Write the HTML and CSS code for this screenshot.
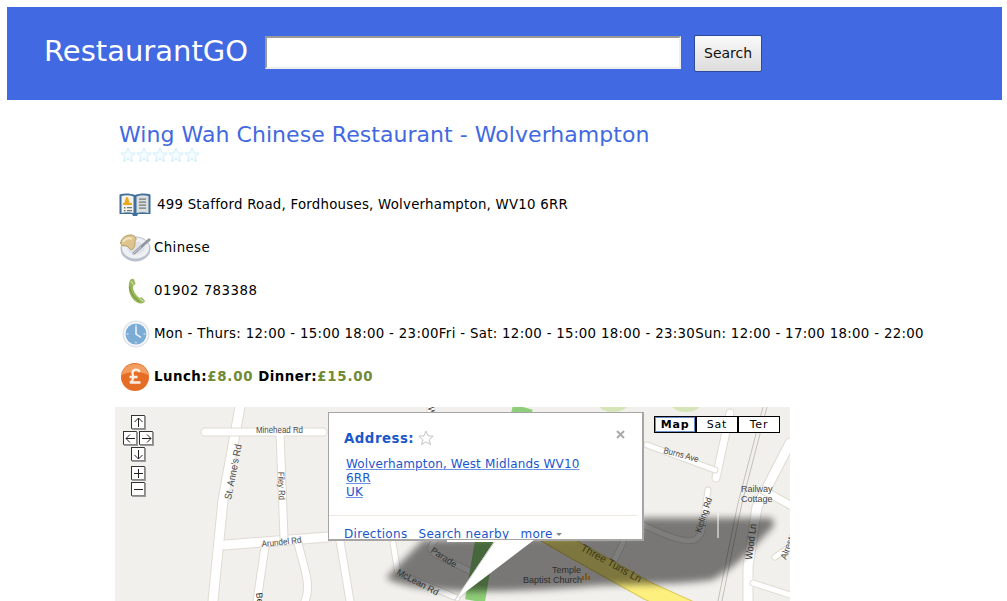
FILE: index.html
```html
<!DOCTYPE html>
<html>
<head>
    <title>RestaurantGO</title>
    <link rel="stylesheet" href="styles.css">
</head>
<body>
    <form class="header">
        <span class="logo">RestaurantGO</span>
        <input type="text" class="search-box">
        <button type="button" class="search-button">Search</button>
    </form>

    <div class="content">
        <h1 class="name">Wing Wah Chinese Restaurant - Wolverhampton</h1>
        <div class="stars">
            <svg width="16" height="16" viewBox="0 0 16 16"><path class="star" d="M8 1l2 4.800 5.200.4-4 3.400 1.300 5L8 11.900 3.500 14.600l1.300-5-4-3.400 5.200-.4z"/></svg>
            <svg width="16" height="16" viewBox="0 0 16 16"><path class="star" d="M8 1l2 4.800 5.200.4-4 3.400 1.300 5L8 11.900 3.500 14.600l1.300-5-4-3.400 5.200-.4z"/></svg>
            <svg width="16" height="16" viewBox="0 0 16 16"><path class="star" d="M8 1l2 4.800 5.200.4-4 3.400 1.300 5L8 11.900 3.500 14.600l1.300-5-4-3.400 5.200-.4z"/></svg>
            <svg width="16" height="16" viewBox="0 0 16 16"><path class="star" d="M8 1l2 4.800 5.200.4-4 3.400 1.300 5L8 11.900 3.500 14.600l1.300-5-4-3.400 5.200-.4z"/></svg>
            <svg width="16" height="16" viewBox="0 0 16 16"><path class="star" d="M8 1l2 4.800 5.200.4-4 3.400 1.300 5L8 11.900 3.500 14.600l1.300-5-4-3.400 5.200-.4z"/></svg>
        </div>

        <div class="info-list">
            <div class="info-row">
                <svg class="icon icon-wide" width="32" height="24" viewBox="0 0 32 24">
                    <path d="M.5 1.500c5-1.500 10-1.500 15.500.5 5.500-2 10.500-2 15.500-.5V21H19l-1 2h-4l-1-2H.5z" fill="#3f6f9a"/>
                    <path d="M2.500 3c4-1 8-1 12 .5V20c-4-1-8-1-12 0z" fill="#f4f2ea"/>
                    <path d="M17.500 3.500c4-1.500 8-1.500 12-.5v17c-4-1-8-1-12 0z" fill="#dadedd"/>
                    <path d="M5 10c1.500-1 1-6 3-6s1.500 5 3 6z" fill="#eba81d"/>
                    <path d="M4 10h9v2H4z" fill="#eba81d"/>
                    <path d="M5 14h1.500v1.500H5zM8 14h5v1.200H8zM5 17h1.500v1.500H5zM8 17h5v1.200H8zM20 5.500h7v1.200h-7zM20 8.500h7v1.200h-7zM20 11.500h7v1.200h-7zM20 14.500h7v1.200h-7z" fill="#77797a"/>
                </svg>
                <span class="text-address">499 Stafford Road, Fordhouses, Wolverhampton, WV10 6RR</span>
            </div>
            <div class="info-row">
                <svg class="icon" width="32" height="28" viewBox="0 0 32 28">
                    <ellipse cx="16.500" cy="15" rx="15" ry="12.500" fill="#b9c1cc"/>
                    <ellipse cx="16.500" cy="14" rx="13.500" ry="10.500" fill="#eef0f4"/>
                    <ellipse cx="17" cy="14" rx="9" ry="6.500" fill="#dfe3e9"/>
                    <path d="M1.500 9c1-5 5-7.500 9-8 4-.5 7 2 6.500 4.500-1 1-1.500 3-1 5-.5 3-2.500 6-4.500 5-3-2.500-2-3.500-5-3.500-2.500 0-4.500-.5-5-3z" fill="#dcc48c" stroke="#a98b50" stroke-width=".8"/>
                    <path d="M4 8c2-3 6-5 9-3" stroke="#f3e7c6" stroke-width="2" fill="none"/>
                    <path d="M14 20L31 5" stroke="#8f969f" stroke-width="2.800"/>
                    <path d="M13 20.500L22 13" stroke="#d5d9de" stroke-width="1"/>
                </svg>
                <span class="text-kind">Chinese</span>
            </div>
            <div class="info-row">
                <svg class="icon" width="32" height="26" viewBox="0 0 32 26">
                    <path d="M11 2c1.500-1.500 3.500-1.500 4-.5l1.500 4c0 1.200-2.500 1.500-2.500 3.500 0 4 3 8.500 6 10.500 1.500.8 2-1 3 0l3 3.500c0 1-2 2.500-4 2.500-6 0-11-7-12-13-.5-4-.2-8 1-10.500z" fill="#98b85a"/>
                    <path d="M12 3l2.500 3.500M20.500 20.500l4 3" stroke="#e3ebcf" stroke-width="1"/>
                    <path d="M10.500 8c.5 6 4.500 12 10 15.500" stroke="#7f9c45" stroke-width="1.200" fill="none"/>
                </svg>
                <span class="text-phone">01902 783388</span>
            </div>
            <div class="info-row">
                <svg class="icon" width="32" height="28" viewBox="0 0 32 28">
                    <circle cx="17" cy="14" r="13.500" fill="#dfe3e8"/>
                    <circle cx="17" cy="14" r="12" fill="#f7f8fa"/>
                    <circle cx="17" cy="14" r="10.500" fill="#7bacd6"/>
                    <path d="M17 4.500v2M17 21.500v2M7.500 14h2M24.500 14h2" stroke="#e8f0f7" stroke-width="1"/>
                    <path d="M17 6.500V14l5 3.500" stroke="#f6f8fb" stroke-width="1.500" fill="none"/>
                </svg>
                <span class="text-hours">Mon - Thurs: 12:00 - 15:00 18:00 - 23:00Fri - Sat: 12:00 - 15:00 18:00 - 23:30Sun: 12:00 - 17:00 18:00 - 22:00</span>
            </div>
            <div class="info-row">
                <svg class="icon" width="32" height="28" viewBox="0 0 32 28">
                    <circle cx="16" cy="14" r="14" fill="#e56d25"/>
                    <path d="M3 12a13 11 0 0 1 26 0c-6-4-20-4-26 0z" fill="#f29e62"/>
                    <path d="M20.500 9c-.5-3-6.500-3.500-7 .5-.2 2 1.500 4 .5 6.500-.5 2-2 3-3 3.500h10.500M10.500 14h8" stroke="#fbeee2" stroke-width="2.300" fill="none"/>
                </svg>
                <span class="text-price"><b>Lunch:</b><b class="price">£8.00</b> <b>Dinner:</b><b class="price">£15.00</b></span>
            </div>
        </div>

        <div class="map">
            <svg class="map-tiles" width="675" height="194" viewBox="115 407 675 194">
                <defs>
                    <filter id="blur" x="-10%" y="-30%" width="120%" height="160%"><feGaussianBlur stdDeviation="3.500"/></filter>
                </defs>
                <rect x="115" y="407" width="675" height="194" fill="#f2f0ec"/>
                <ellipse cx="613" cy="405" rx="14" ry="7" fill="#d6e5b8"/>
                <ellipse cx="686" cy="405" rx="14" ry="7" fill="#d6e5b8"/>

                <g class="edge-wide">
                    <path d="M240 407L223 500L213 601M225 545L328 537M790 443L757 507L748 567V601"/>
                </g>
                <g class="road-wide">
                    <path d="M240 407L223 500L213 601M225 545L328 537M790 443L757 507L748 567V601"/>
                </g>
                <g class="edge-mid">
                    <path d="M205 432H323M280 433L284 538M265 547L257 601M298 543C303 565 312 585 305 601M340 541L350 601M730 413L716 478M763 490L790 505M431 405V414"/>
                </g>
                <g class="road-mid">
                    <path d="M205 432H323M280 433L284 538M265 547L257 601M298 543C303 565 312 585 305 601M340 541L350 601M730 413L716 478M763 490L790 505M431 405V414"/>
                </g>
                <g class="edge-thin">
                    <path d="M393 543L398 573L457 598M435 541C428 548 430 552 438 556L472 572M647 445L715 470M708 490L702 530C698 545 685 545 643 525M623 543L613 563M753 583L790 595M775 557L790 547"/>
                </g>
                <g class="road-thin">
                    <path d="M393 543L398 573L457 598M435 541C428 548 430 552 438 556L472 572M647 445L715 470M708 490L702 530C698 545 685 545 643 525M623 543L613 563M753 583L790 595M775 557L790 547"/>
                </g>
                <path class="rail" d="M763 407L738 503L718 601M767 407L742 503L722 601"/>
                <path d="M523 407L485 541L475 601" stroke="#8fce78" stroke-width="20" fill="none"/>
                <path d="M535 527L580 553L648 591L690 610" stroke="#dcc95c" stroke-width="19" fill="none"/>
                <path d="M535 527L580 553L648 591L690 610" stroke="#fdf07f" stroke-width="17" fill="none"/>

                <path class="cast" d="M386 578L423 540L640 535V518H768C775 518 775 524 772 528C755 545 740 565 712 580C680 585 620 584 590 586C550 590 490 592 455 591C430 590 400 586 386 578z" filter="url(#blur)"/>
                <path d="M718 513V538" stroke="#ffffff" stroke-width="1"/>

                <text class="label" x="256" y="433" textLength="47" lengthAdjust="spacingAndGlyphs">Minehead Rd</text>
                <text class="label label-large" transform="translate(231 500) rotate(-79)" textLength="56" lengthAdjust="spacingAndGlyphs">St. Anne's Rd</text>
                <text class="label" transform="translate(278 472) rotate(88)" textLength="28" lengthAdjust="spacingAndGlyphs">Filey Rd</text>
                <text class="label" transform="translate(262 547) rotate(-6)" textLength="40" lengthAdjust="spacingAndGlyphs">Arundel Rd</text>
                <text class="label label-dark" transform="translate(256 593) rotate(84)">Be</text>
                <text class="label label-dark" transform="translate(428 407) rotate(85)">W</text>
                <text class="label label-dark" transform="translate(430 552) rotate(33)">Parade</text>
                <text class="label label-dark" transform="translate(396 574) rotate(28)">McLean Rd</text>
                <text class="label label-dark" x="552" y="573">Temple</text>
                <text class="label label-dark" x="523" y="583">Baptist Church</text>
                <text class="label label-road" transform="translate(580 550) rotate(29)">Three Tuns Ln</text>
                <text class="label" transform="translate(663 453) rotate(15)" textLength="36" lengthAdjust="spacingAndGlyphs">Burns Ave</text>
                <text class="label label-dark" transform="translate(701 533) rotate(-72)" textLength="36" lengthAdjust="spacingAndGlyphs">Kipling Rd</text>
                <text class="label" x="741" y="492">Railway</text>
                <text class="label" x="741" y="502">Cottage</text>
                <text class="label label-large label-dark" transform="translate(752 560) rotate(-83)" textLength="36" lengthAdjust="spacingAndGlyphs">Wood Ln</text>
                <text class="label" transform="translate(786 560) rotate(-70)">Alreston</text>
                <path d="M582 580v-4h2v4zM585 580v-7h2v7zM588 580v-4h2v4z" fill="#7a5a20"/>
            </svg>

            <div class="pan-button pan-up"><svg width="13" height="13" viewBox="0 0 13 13"><path d="M6.500 11V2M2.500 6l4-4 4 4"/></svg></div>
            <div class="pan-button pan-left"><svg width="13" height="13" viewBox="0 0 13 13"><path d="M11 6.500H2M6 2.500l-4 4 4 4"/></svg></div>
            <div class="pan-button pan-right"><svg width="13" height="13" viewBox="0 0 13 13"><path d="M2 6.500h9M7 2.500l4 4-4 4"/></svg></div>
            <div class="pan-button pan-down"><svg width="13" height="13" viewBox="0 0 13 13"><path d="M6.500 2v9M2.500 7l4 4 4-4"/></svg></div>
            <div class="pan-button zoom-in"><svg width="13" height="13" viewBox="0 0 13 13"><path d="M6.500 2v9M2 6.500h9"/></svg></div>
            <div class="pan-button zoom-out"><svg width="13" height="13" viewBox="0 0 13 13"><path d="M2 6.500h9"/></svg></div>

            <div class="map-types">
                <div class="map-type map-type-on">Map</div>
                <div class="map-type">Sat</div>
                <div class="map-type">Ter</div>
            </div>

            <div class="bubble">
                <div class="bubble-title">Address:
                    <svg width="16" height="16" viewBox="0 0 16 16"><path class="bubble-star" d="M8 1l2 4.800 5.200.4-4 3.400 1.300 5L8 11.900 3.500 14.600l1.300-5-4-3.400 5.200-.4z"/></svg>
                </div>
                <svg class="bubble-close" width="9" height="9" viewBox="0 0 9 9"><path d="M1 1l7 7M8 1L1 8"/></svg>
                <a class="bubble-address" href="#">Wolverhampton, West Midlands WV10<br>6RR<br>UK</a>
                <div class="bubble-links">
                    <a href="#">Directions</a>
                    <a href="#">Search nearby</a>
                    <a href="#">more<span class="caret"></span></a>
                </div>
            </div>
            <svg class="bubble-tail" width="88" height="61" viewBox="0 0 88 61">
                <path d="M48 0H87L8 60z" fill="#ffffff"/>
                <path d="M48 1L8 60" stroke="#c8c8c8" stroke-width="1"/>
                <path d="M0 0H48V2H0z" fill="#ffffff"/>
            </svg>
        </div>
    </div>
</body>
</html>
```

FILE: styles.css
```css
html {
    overflow: hidden;
}

body {
    margin: 7px 5px 0 7px;
    height: 594px;
    overflow: hidden;
    font-family: "DejaVu Sans", sans-serif;
    font-size: 13.33px;
    color: #000;
}

.header {
    display: flex;
    align-items: center;
    height: 93px;
    padding-left: 37px;
    background-color: #4169e1;
}

.logo {
    margin: 0 17px 6px 0;
    color: #fff;
    font-size: 29px;
}

.search-box {
    box-sizing: border-box;
    width: 416px;
    height: 33px;
    margin: 0 13px 3px 0;
    border: 2px solid;
    border-color: #999 #eee #eee #999;
    background-color: #fff;
}

.search-button {
    box-sizing: border-box;
    width: 68px;
    height: 37px;
    margin-bottom: 1px;
    border: 1px solid #2e4a99;
    border-radius: 2px;
    background: linear-gradient(#fafafa, #dcdcdc);
    color: #111;
    font-family: "DejaVu Sans", sans-serif;
    font-size: 14px;
}

.content {
    padding: 21px 0 0 108px;
}

.name {
    margin: 0 0 0 4px;
    color: #4169e1;
    font-size: 22px;
    font-weight: normal;
    line-height: 27px;
    letter-spacing: 0.05px;
}

.stars {
    display: flex;
    height: 16px;
    margin: -1px 0 0 5px;
}

.star {
    fill: #f4fcff;
    stroke: #d0eff8;
    stroke-width: 1;
}

.info-list {
    margin-top: 20px;
    margin-left: 4px;
}

.info-row {
    display: flex;
    align-items: center;
    height: 43px;
}

.icon {
    flex: none;
    margin-right: 3px;
}

.icon-wide {
    margin-right: 6px;
}

.text-address {
    letter-spacing: 0.24px;
}

.text-kind {
    letter-spacing: 0.4px;
}

.text-phone {
    letter-spacing: 0.5px;
}

.text-hours {
    letter-spacing: 0.32px;
}

.text-price {
    letter-spacing: 0.5px;
}

.price {
    color: #708a35;
    letter-spacing: 0.8px;
}

.map {
    position: relative;
    width: 675px;
    height: 194px;
    margin-top: 9px;
    overflow: hidden;
}

.map-tiles {
    display: block;
}

.edge-wide path,
.edge-mid path,
.edge-thin path,
.road-wide path,
.road-mid path,
.road-thin path {
    fill: none;
    stroke-linecap: round;
    stroke-linejoin: round;
}

.edge-wide path,
.edge-mid path,
.edge-thin path {
    stroke: #dfdbd2;
}

.road-wide path,
.road-mid path,
.road-thin path {
    stroke: #fff;
}

.edge-wide path { stroke-width: 11; }
.road-wide path { stroke-width: 9; }
.edge-mid path { stroke-width: 9; }
.road-mid path { stroke-width: 7; }
.edge-thin path { stroke-width: 7; }
.road-thin path { stroke-width: 5; }

.rail {
    fill: none;
    stroke: #c4c1ba;
    stroke-width: 1;
}

.cast {
    fill: #000;
    opacity: 0.5;
}

.label {
    fill: #4a4a4a;
    font-family: "Liberation Sans", sans-serif;
    font-size: 9px;
}

.label-large {
    font-size: 10px;
}

.label-dark {
    fill: #2e2e2e;
}

.label-road {
    fill: #3e3514;
    font-size: 10.5px;
}

.pan-button {
    position: absolute;
    box-sizing: border-box;
    width: 14px;
    height: 14px;
    border: 1px solid #333;
    border-right-color: #888;
    border-bottom-color: #888;
    background-color: #fff;
    box-shadow: 1px 1px 0 #999;
}

.pan-button svg {
    display: block;
    margin: -0.5px;
    fill: none;
    stroke: #222;
    stroke-width: 1;
}

.pan-up { left: 16px; top: 8px; }
.pan-left { left: 8px; top: 24px; }
.pan-right { left: 24px; top: 24px; }
.pan-down { left: 16px; top: 40px; }
.zoom-in { left: 16px; top: 59px; }
.zoom-out { left: 16px; top: 75px; }

.map-types {
    position: absolute;
    left: 539px;
    top: 9px;
    display: flex;
}

.map-type {
    box-sizing: border-box;
    width: 42px;
    height: 17px;
    border: 1px solid #000;
    background-color: #fff;
    font-size: 11px;
    line-height: 15px;
    letter-spacing: 0.8px;
    text-align: center;
}

.map-type-on {
    font-weight: bold;
    box-shadow: inset 0 0 0 1px #6d8fc9;
}

.bubble {
    position: absolute;
    left: 213px;
    top: 5px;
    box-sizing: border-box;
    width: 316px;
    height: 129px;
    padding: 16px 15px 0 15px;
    border: 1px solid #a5a5a5;
    border-right-width: 2px;
    border-bottom-width: 2px;
    overflow: hidden;
    background-color: #fff;
    color: #1a56cc;
}

.bubble a {
    color: #1a56cc;
    text-decoration-color: #6d94e0;
}

.bubble-title {
    display: flex;
    align-items: center;
    gap: 4px;
    height: 18px;
    font-size: 13.33px;
    font-weight: bold;
    letter-spacing: 0.5px;
}

.bubble-star {
    fill: #fff;
    stroke: #c4c4c4;
}

.bubble-close {
    position: absolute;
    right: 17px;
    top: 17px;
    fill: none;
    stroke: #aaa;
    stroke-width: 2;
}

.bubble-address {
    display: block;
    margin: 10px 0 0 2px;
    font-size: 12px;
    line-height: 14px;
    letter-spacing: 0.15px;
}

.bubble-links {
    display: flex;
    gap: 11px;
    margin: 16px -10px 0 -15px;
    padding: 11px 0 0 15px;
    border-top: 1px solid #eee9dd;
    font-size: 12px;
    line-height: 15px;
    letter-spacing: 0.3px;
}

.bubble-links a {
    text-decoration: none;
}

.caret {
    display: inline-block;
    margin: 0 0 2px 3px;
    border: 3px solid transparent;
    border-top-color: #888;
    border-bottom-width: 0;
}

.bubble-tail {
    position: absolute;
    left: 332px;
    top: 133px;
}
```
